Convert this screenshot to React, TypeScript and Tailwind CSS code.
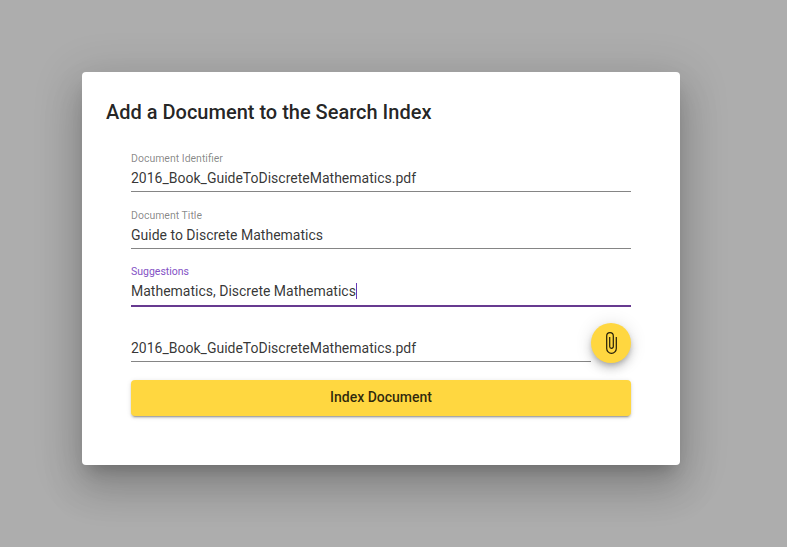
import React from "react";

type FieldProps = { label?: string; value: string; focused?: boolean };

function Field({ label, value, focused }: FieldProps) {
  return (
    <div className={focused ? "h-[56px]" : "h-[57px]"}>
      <div className={`text-[10.5px] leading-[13px] h-[13px] ${focused ? "text-[#8352c5]" : "text-black/48"}`}>{label}</div>
      <div className="flex h-[26px] items-center text-[14px] leading-4 text-black/80">
        <span>{value}</span>
        {focused && <span className="h-4 w-px bg-[#673ab7]" />}
      </div>
      <div className={focused ? "mt-px h-[2px] bg-[#673a90]" : "h-px bg-black/48"} />
    </div>
  );
}

export default function App() {
  return (
    <div className="h-[547px] w-[787px] overflow-hidden bg-[#adadad] pt-[72px] pl-[82px] font-[Roboto,sans-serif]">
      <div className="h-[393px] w-[598px] rounded-[4px] bg-white px-6 pt-6 shadow-[0_11px_15px_-7px_rgba(0,0,0,.2),0_24px_38px_3px_rgba(0,0,0,.14),0_9px_46px_8px_rgba(0,0,0,.12)]">
        <h1 className="text-[20px] leading-8 font-medium text-black/87">Add a Document to the Search Index</h1>
        <div className="ml-[25px] w-[500px] pt-6">
          <Field label="Document Identifier" value="2016_Book_GuideToDiscreteMathematics.pdf" />
          <Field label="Document Title" value="Guide to Discrete Mathematics" />
          <div className="-mt-px">
            <Field label="Suggestions" value="Mathematics, Discrete Mathematics" focused />
          </div>
          <div className="flex h-[59px]">
            <div className="w-[460px] pt-px">
              <Field value="2016_Book_GuideToDiscreteMathematics.pdf" />
            </div>
            <button className="mt-[2px] flex size-10 items-center justify-center rounded-full bg-[#ffd740] shadow-[0_3px_5px_-1px_rgba(0,0,0,.2),0_6px_10px_0_rgba(0,0,0,.14),0_1px_18px_0_rgba(0,0,0,.12)]">
              <svg width="24" height="24" viewBox="0 0 24 24" fill="none" stroke="rgba(0,0,0,.87)" strokeWidth="1.2">
                <path d="M17.300 6v11.500a4.800 4.800 0 0 1-9.600 0V5a3.300 3.300 0 0 1 6.600 0v10.500a1.800 1.800 0 0 1-3.600 0V6" />
              </svg>
            </button>
          </div>
          <button className="flex h-9 w-full justify-center rounded-[4px] bg-[#ffd740] text-[14px] leading-[34px] font-medium text-black/82 shadow-[0_3px_1px_-2px_rgba(0,0,0,.2),0_2px_2px_0_rgba(0,0,0,.14),0_1px_5px_0_rgba(0,0,0,.12)]">Index Document</button>
        </div>
      </div>
    </div>
  );
}
